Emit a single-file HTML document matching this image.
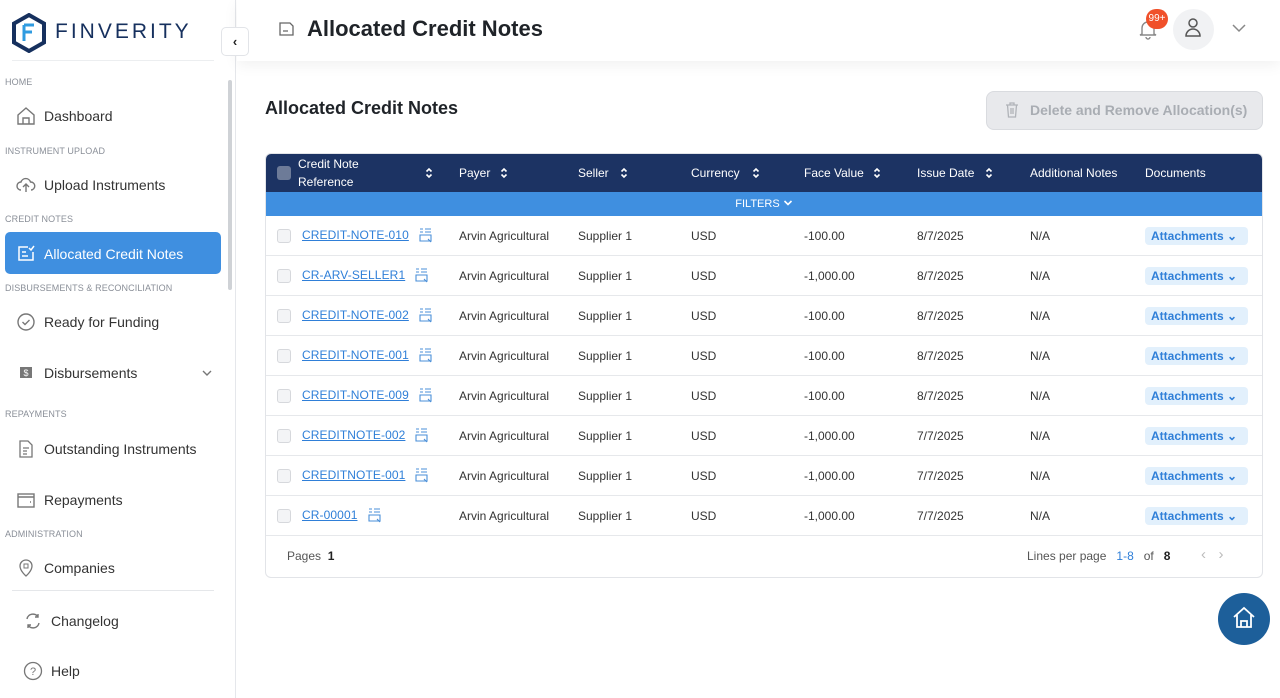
<!DOCTYPE html>
<html><head><style>
*{box-sizing:border-box;margin:0;padding:0}
body{width:1280px;height:698px;overflow:hidden;font-family:"Liberation Sans",sans-serif;background:#fff;position:relative;color:#222}
.sb{position:absolute;left:0;top:0;width:236px;height:698px;background:#fff;border-right:1px solid #e5e7eb}
.sec{position:absolute;left:5px;font-size:9px;color:#8a8f98;letter-spacing:.1px}
.it{position:absolute;left:44px;font-size:14px;color:#333}
.ic{position:absolute;left:16px;width:20px;height:20px}
.hdr{position:absolute;left:237px;top:0;width:1043px;height:61px;background:#fff;box-shadow:0 4px 14px rgba(0,0,0,.06)}
.tbl{position:absolute;left:265px;top:153px;width:998px;height:425px;border:1px solid #e2e4e8;border-radius:6px;background:#fff;overflow:hidden}
.th{position:absolute;left:0;top:0;width:100%;height:38px;background:#1c3363;color:#fff;font-size:12px}
.th span{position:absolute;top:12px}
.th svg{position:absolute;top:13px}
.flt{position:absolute;top:38px;left:0;width:100%;height:24px;background:#3f8fe0;color:#fff;font-size:11px;text-align:center;line-height:24px}
.row{position:absolute;left:0;width:100%;height:40px;border-bottom:1px solid #e6e8eb;font-size:12px;color:#333}
.row span{position:absolute;top:13px}
.row span.r{top:11px;display:flex;align-items:center}
.cb{position:absolute;left:11px;top:13px;width:14px;height:14px;border:1px solid #d6d8dc;border-radius:3px;background:#f3f4f6}
.ref{color:#2f7fd8;text-decoration:underline;letter-spacing:.1px}
.r svg{margin-left:10px}
.att{position:absolute;left:879px;top:11px;width:103px;height:18px;background:#e2f0fc;color:#2f7fd8;border-radius:4px;font-weight:bold;font-size:12px;padding-left:6px;line-height:18px}
</style></head><body>
<svg width="0" height="0" style="position:absolute"><defs>
<symbol id="s" viewBox="0 0 8 12"><path d="M1.5 4.5L4 2l2.5 2.5M1.5 7.5L4 10l2.5-2.5" fill="none" stroke="#fff" stroke-width="1.6"/></symbol>
<symbol id="d" viewBox="0 0 14 16"><path d="M1 2h3M1 5h3M6 2h6M6 5h6M1 8h11v6H1zM9 12l3 3" fill="none" stroke="#4a8fd8" stroke-width="1.1"/></symbol>
</defs></svg>
<div class="sb">
<svg style="position:absolute;left:11px;top:13px" width="36" height="40" viewBox="0 0 36 40"><polygon points="18,2 33,10.5 33,29.5 18,38 3,29.5 3,10.5" fill="none" stroke="#16305e" stroke-width="4"/><path d="M13 12h10M13 12v16M13 19h8" stroke="#2f9be0" stroke-width="3" fill="none"/></svg>
<div style="position:absolute;left:55px;top:20px;font-size:21px;letter-spacing:3px;color:#16305e">FINVERITY</div>
<div style="position:absolute;left:12px;top:60px;width:202px;height:1px;background:#eceef0"></div>
<div style="position:absolute;left:228px;top:80px;width:4px;height:210px;background:#cfd2d6;border-radius:2px"></div>
<div class="sec" style="top:77px">HOME</div>
<svg class="ic" style="top:106px" viewBox="0 0 20 20"><path d="M2 9L10 2l8 7v9H2z M7 18v-6h6v6" fill="none" stroke="#777" stroke-width="1.4"/></svg>
<div class="it" style="top:108px">Dashboard</div>
<div class="sec" style="top:146px">INSTRUMENT UPLOAD</div>
<svg class="ic" style="top:175px" viewBox="0 0 20 20"><path d="M5 15a4 4 0 010-8 5 5 0 019.5 0 4 4 0 01.5 8M10 17v-7M7 12l3-3 3 3" fill="none" stroke="#777" stroke-width="1.4"/></svg>
<div class="it" style="top:177px">Upload Instruments</div>
<div class="sec" style="top:214px">CREDIT NOTES</div>
<div style="position:absolute;left:5px;top:232px;width:216px;height:42px;background:#3f8fe0;border-radius:5px"></div>
<svg class="ic" style="top:243px" viewBox="0 0 20 20"><path d="M12 4H3v13h14V9M6 9h4M6 13h6M13 5l2 2 3-4" fill="none" stroke="#fff" stroke-width="1.5"/></svg>
<div class="it" style="top:246px;color:#fff">Allocated Credit Notes</div>
<div class="sec" style="top:283px">DISBURSEMENTS &amp; RECONCILIATION</div>
<svg class="ic" style="top:312px" viewBox="0 0 20 20"><circle cx="10" cy="10" r="8" fill="none" stroke="#777" stroke-width="1.4"/><path d="M6.5 10l2.5 2.5 4.5-4.5" fill="none" stroke="#777" stroke-width="1.4"/></svg>
<div class="it" style="top:314px">Ready for Funding</div>
<svg class="ic" style="top:363px" viewBox="0 0 20 20"><rect x="4" y="4" width="12" height="11" fill="#777"/><text x="10" y="13" font-size="9" fill="#fff" text-anchor="middle">$</text></svg>
<div class="it" style="top:365px">Disbursements</div>
<svg style="position:absolute;left:201px;top:369px" width="12" height="8" viewBox="0 0 12 8"><path d="M2 2l4 4 4-4" fill="none" stroke="#777" stroke-width="1.4"/></svg>
<div class="sec" style="top:409px">REPAYMENTS</div>
<svg class="ic" style="top:439px" viewBox="0 0 20 20"><path d="M4 2h8l4 4v12H4z M7 9h6M7 12h4M7 15h4" fill="none" stroke="#777" stroke-width="1.3"/></svg>
<div class="it" style="top:441px">Outstanding Instruments</div>
<svg class="ic" style="top:490px" viewBox="0 0 20 20"><rect x="2" y="4" width="16" height="13" fill="none" stroke="#777" stroke-width="1.4"/><path d="M2 7h16M14 12h1" stroke="#777" stroke-width="1.4"/></svg>
<div class="it" style="top:492px">Repayments</div>
<div class="sec" style="top:529px">ADMINISTRATION</div>
<svg class="ic" style="top:558px" viewBox="0 0 20 20"><path d="M10 18s-6-5-6-10a6 6 0 0112 0c0 5-6 10-6 10z" fill="none" stroke="#777" stroke-width="1.3"/><rect x="8" y="6" width="4" height="4" fill="none" stroke="#777"/></svg>
<div class="it" style="top:560px">Companies</div>
<div style="position:absolute;left:12px;top:590px;width:202px;height:1px;background:#e5e7ea"></div>
<svg class="ic" style="left:23px;top:611px" viewBox="0 0 20 20"><path d="M4 8a6 6 0 0111-2M16 12a6 6 0 01-11 2M15 3v3h-3M5 17v-3h3" fill="none" stroke="#777" stroke-width="1.4"/></svg>
<div class="it" style="left:51px;top:613px">Changelog</div>
<svg class="ic" style="left:23px;top:661px" viewBox="0 0 20 20"><circle cx="10" cy="10" r="8.5" fill="none" stroke="#777" stroke-width="1.3"/><text x="10" y="14" font-size="11" fill="#777" text-anchor="middle">?</text></svg>
<div class="it" style="left:51px;top:663px">Help</div>
</div>
<div class="hdr">
<svg style="position:absolute;left:42px;top:21px" width="18" height="16" viewBox="0 0 18 16"><path d="M1 2h10l3 3v9H1z M4 10h5" fill="none" stroke="#666" stroke-width="1.3"/></svg>
<div style="position:absolute;left:70px;top:16px;font-size:22px;font-weight:bold;color:#1f2328">Allocated Credit Notes</div>
<svg style="position:absolute;left:900px;top:18px" width="22" height="22" viewBox="0 0 22 22"><path d="M5 16V10a6 6 0 0112 0v6l2 1H3zM9 19a2 2 0 004 0" fill="none" stroke="#888" stroke-width="1.4"/></svg>
<div style="position:absolute;left:909px;top:9px;width:22px;height:20px;background:#f0502a;border-radius:10px;color:#fff;font-size:10px;text-align:center;line-height:20px">99+</div>
<div style="position:absolute;left:936px;top:9px;width:41px;height:41px;border-radius:50%;background:#f1f2f4"></div>
<svg style="position:absolute;left:946px;top:17px" width="20" height="22" viewBox="0 0 20 22"><circle cx="10" cy="6" r="4" fill="none" stroke="#555" stroke-width="1.5"/><path d="M3 19a7 7 0 0114 0z" fill="none" stroke="#555" stroke-width="1.5"/></svg>
<svg style="position:absolute;left:995px;top:23px" width="14" height="10" viewBox="0 0 14 10"><path d="M1 2l6 6 6-6" fill="none" stroke="#888" stroke-width="1.5"/></svg>
</div>
<div style="position:absolute;left:221px;top:27px;width:28px;height:29px;background:#fff;border:1px solid #e2e4e8;border-radius:5px;text-align:center;line-height:27px;font-size:13px;font-weight:bold;color:#222">&#8249;</div>
<div style="position:absolute;left:265px;top:98px;font-size:18px;font-weight:bold;color:#1f2328">Allocated Credit Notes</div>
<div style="position:absolute;left:986px;top:91px;width:277px;height:39px;background:#e8e9ec;border:1px solid #d9dbdf;border-radius:8px;color:#a9adb3;font-size:14px;font-weight:bold;line-height:37px;padding-left:43px">Delete and Remove Allocation(s)</div>
<svg style="position:absolute;left:1005px;top:102px" width="14" height="16" viewBox="0 0 14 16"><path d="M1 3h12M5 3V1h4v2M2.5 3l1 12h7l1-12M6 6v6M8 6v6" fill="none" stroke="#b0b3b8" stroke-width="1.3"/></svg>
<div class="tbl">
<div class="th">
<div class="cb" style="background:#6d7b98;border:none;top:12px"></div>
<span style="left:32px;top:1px;line-height:18px">Credit Note<br>Reference</span><svg style="left:159px" width="8" height="12"><use href="#s"/></svg>
<span style="left:193px">Payer</span><svg style="left:234px" width="8" height="12"><use href="#s"/></svg>
<span style="left:312px">Seller</span><svg style="left:354px" width="8" height="12"><use href="#s"/></svg>
<span style="left:425px">Currency</span><svg style="left:486px" width="8" height="12"><use href="#s"/></svg>
<span style="left:538px">Face Value</span><svg style="left:607px" width="8" height="12"><use href="#s"/></svg>
<span style="left:651px">Issue Date</span><svg style="left:719px" width="8" height="12"><use href="#s"/></svg>
<span style="left:764px">Additional Notes</span>
<span style="left:879px">Documents</span>
</div>
<div class="flt">FILTERS <svg width="10" height="8" viewBox="0 0 10 8"><path d="M1.5 2l3.5 3.5L8.5 2" fill="none" stroke="#fff" stroke-width="1.6"/></svg></div>
<div class="row" style="top:62px"><div class="cb"></div><span class="r" style="left:36px"><u class="ref">CREDIT-NOTE-010</u><svg width="14" height="16"><use href="#d"/></svg></span><span style="left:193px">Arvin Agricultural</span><span style="left:312px">Supplier 1</span><span style="left:425px">USD</span><span style="left:538px">-100.00</span><span style="left:651px">8/7/2025</span><span style="left:764px">N/A</span><div class="att">Attachments &#8964;</div></div>
<div class="row" style="top:102px"><div class="cb"></div><span class="r" style="left:36px"><u class="ref">CR-ARV-SELLER1</u><svg width="14" height="16"><use href="#d"/></svg></span><span style="left:193px">Arvin Agricultural</span><span style="left:312px">Supplier 1</span><span style="left:425px">USD</span><span style="left:538px">-1,000.00</span><span style="left:651px">8/7/2025</span><span style="left:764px">N/A</span><div class="att">Attachments &#8964;</div></div>
<div class="row" style="top:142px"><div class="cb"></div><span class="r" style="left:36px"><u class="ref">CREDIT-NOTE-002</u><svg width="14" height="16"><use href="#d"/></svg></span><span style="left:193px">Arvin Agricultural</span><span style="left:312px">Supplier 1</span><span style="left:425px">USD</span><span style="left:538px">-100.00</span><span style="left:651px">8/7/2025</span><span style="left:764px">N/A</span><div class="att">Attachments &#8964;</div></div>
<div class="row" style="top:182px"><div class="cb"></div><span class="r" style="left:36px"><u class="ref">CREDIT-NOTE-001</u><svg width="14" height="16"><use href="#d"/></svg></span><span style="left:193px">Arvin Agricultural</span><span style="left:312px">Supplier 1</span><span style="left:425px">USD</span><span style="left:538px">-100.00</span><span style="left:651px">8/7/2025</span><span style="left:764px">N/A</span><div class="att">Attachments &#8964;</div></div>
<div class="row" style="top:222px"><div class="cb"></div><span class="r" style="left:36px"><u class="ref">CREDIT-NOTE-009</u><svg width="14" height="16"><use href="#d"/></svg></span><span style="left:193px">Arvin Agricultural</span><span style="left:312px">Supplier 1</span><span style="left:425px">USD</span><span style="left:538px">-100.00</span><span style="left:651px">8/7/2025</span><span style="left:764px">N/A</span><div class="att">Attachments &#8964;</div></div>
<div class="row" style="top:262px"><div class="cb"></div><span class="r" style="left:36px"><u class="ref">CREDITNOTE-002</u><svg width="14" height="16"><use href="#d"/></svg></span><span style="left:193px">Arvin Agricultural</span><span style="left:312px">Supplier 1</span><span style="left:425px">USD</span><span style="left:538px">-1,000.00</span><span style="left:651px">7/7/2025</span><span style="left:764px">N/A</span><div class="att">Attachments &#8964;</div></div>
<div class="row" style="top:302px"><div class="cb"></div><span class="r" style="left:36px"><u class="ref">CREDITNOTE-001</u><svg width="14" height="16"><use href="#d"/></svg></span><span style="left:193px">Arvin Agricultural</span><span style="left:312px">Supplier 1</span><span style="left:425px">USD</span><span style="left:538px">-1,000.00</span><span style="left:651px">7/7/2025</span><span style="left:764px">N/A</span><div class="att">Attachments &#8964;</div></div>
<div class="row" style="top:342px"><div class="cb"></div><span class="r" style="left:36px"><u class="ref">CR-00001</u><svg width="14" height="16"><use href="#d"/></svg></span><span style="left:193px">Arvin Agricultural</span><span style="left:312px">Supplier 1</span><span style="left:425px">USD</span><span style="left:538px">-1,000.00</span><span style="left:651px">7/7/2025</span><span style="left:764px">N/A</span><div class="att">Attachments &#8964;</div></div>
<div style="position:absolute;left:21px;top:395px;font-size:12px;color:#555">Pages &nbsp;<b style="color:#222">1</b></div>
<div style="position:absolute;left:761px;top:395px;font-size:12px;color:#555">Lines per page &nbsp; <span style="color:#2f7fd8">1-8</span> &nbsp; of &nbsp; <b style="color:#222">8</b></div>
<div style="position:absolute;left:935px;top:392px;font-size:15px;color:#bbb">&#8249; &nbsp; &#8250;</div>
</div>
<div style="position:absolute;left:1218px;top:593px;width:52px;height:52px;border-radius:50%;background:#1d5f9a"></div>
<svg style="position:absolute;left:1231px;top:605px" width="26" height="26" viewBox="0 0 26 26"><path d="M3 12L13 3l10 9M6 10v12h14V10M10 22v-6h6v6" fill="none" stroke="#fff" stroke-width="1.8"/></svg>
</body></html>
